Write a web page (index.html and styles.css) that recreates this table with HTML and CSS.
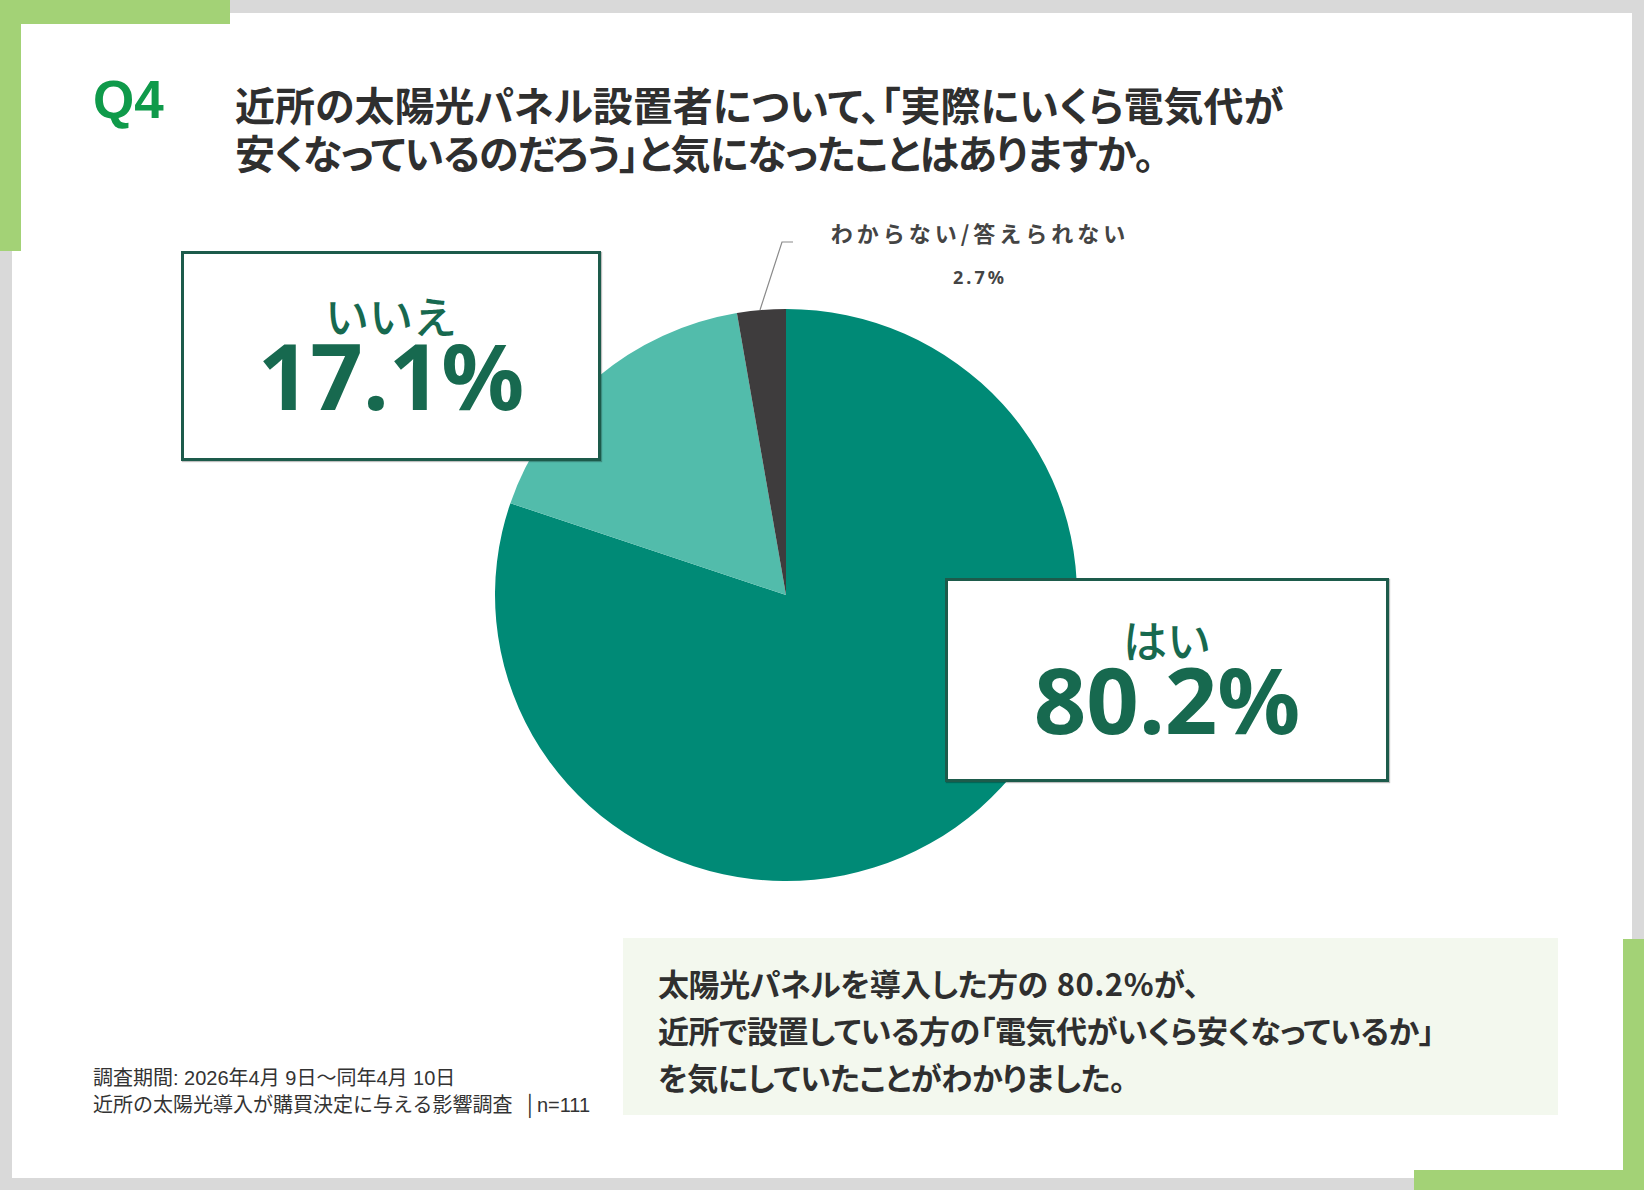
FILE: index.html
```html
<!DOCTYPE html>
<html lang="ja">
<head>
<meta charset="utf-8">
<title>Q4 調査結果</title>
<link rel="stylesheet" href="styles.css">
</head>
<body>
<div class="page">
  <div class="deco deco-tl-h"></div>
  <div class="deco deco-tl-v"></div>
  <div class="deco deco-br-v"></div>
  <div class="deco deco-br-h"></div>

  <div class="card">
    <header class="header">
      <div class="qnum">Q4</div>
      <h1 class="title"><span class="title-line">近所の太陽光パネル設置者について、「実際にいくら電気代が</span><span class="title-line title-line-2">安くなっているのだろう」と気になったことはありますか。</span></h1>
    </header>

    <section class="chart">
      <svg class="pie" width="1620" height="720" viewBox="0 0 1620 720">
        <path d="M774,396 L774,110 A291,286 0 1 1 498.4,304.2 Z" fill="#008a76"/>
        <path d="M774,396 L498.4,304.2 A291,286 0 0 1 724.9,114.1 Z" fill="#52bcab"/>
        <path d="M774,396 L724.9,114.1 A291,286 0 0 1 774,110 Z" fill="#3e3c3d"/>
        <polyline points="748,111 770,43 781,43" fill="none" stroke="#8a8a8a" stroke-width="1.2"/>
      </svg>

      <div class="callout">
        <div class="callout-label">わからない/答えられない</div>
        <div class="callout-value">2.7%</div>
      </div>

      <div class="result result-no">
        <div class="result-label">いいえ</div>
        <div class="result-value">17.1%</div>
      </div>

      <div class="result result-yes">
        <div class="result-label">はい</div>
        <div class="result-value">80.2%</div>
      </div>
    </section>

    <section class="bottom">
      <div class="note">
        <div>調査期間: 2026年4月 9日～同年4月 10日</div>
        <div>近所の太陽光導入が購買決定に与える影響調査<span class="note-n">│n=111</span></div>
      </div>
      <div class="summary">
        <p>太陽光パネルを導入した方の<span class="num">80.2%</span>が、</p>
        <p>近所で設置している方の「電気代がいくら安くなっているか」</p>
        <p>を気にしていたことがわかりました。</p>
      </div>
    </section>
  </div>
</div>
</body>
</html>
```

FILE: styles.css
```css
* { box-sizing: border-box; }

html, body {
  margin: 0;
  padding: 0;
}

body {
  width: 1644px;
  height: 1190px;
  overflow: hidden;
  background: #d9d9d9;
  font-family: "Noto Sans CJK JP", "Noto Sans", sans-serif;
  color: #333333;
}

.page {
  position: relative;
  width: 1644px;
  height: 1190px;
  padding: 13px 12px 12px 12px;
  background: #d9d9d9;
}

.deco {
  position: absolute;
  background: #a3d276;
  z-index: 2;
}
.deco-tl-h { left: 0; top: 0; width: 230px; height: 24px; }
.deco-tl-v { left: 0; top: 0; width: 21px; height: 251px; }
.deco-br-v { right: 0; top: 939px; width: 21px; bottom: 0; }
.deco-br-h { right: 0; bottom: 0; width: 230px; height: 20px; }

.card {
  width: 1620px;
  height: 1165px;
  background: #ffffff;
  display: flex;
  flex-direction: column;
}

/* Header */
.header {
  display: flex;
  align-items: flex-start;
  padding: 61px 0 0 81px;
}

.qnum {
  width: 142px;
  flex: none;
  font-family: "Liberation Sans", Arial, sans-serif;
  font-weight: 700;
  font-size: 53px;
  line-height: 52px;
  color: #0f9a4a;
}

.title {
  margin: 6px 0 0 0;
  font-family: "Noto Sans CJK JP", sans-serif;
  font-weight: 700;
  font-size: 40px;
  line-height: 48px;
  letter-spacing: 0;
  font-feature-settings: "palt";
  color: #2f2f2f;
  white-space: nowrap;
}
.title-line {
  display: block;
}
.title-line-2 {
  letter-spacing: -1px;
}

/* Chart */
.chart {
  position: relative;
  margin-top: 23px;
  height: 720px;
  flex: none;
}

.pie {
  position: absolute;
  left: 0;
  top: 0;
  display: block;
}

.callout {
  position: absolute;
  left: 816px;
  top: 18px;
  width: 304px;
  text-align: center;
  color: #444444;
}
.callout-label {
  font-size: 22px;
  line-height: 30px;
  font-weight: 700;
  letter-spacing: 4px;
  white-space: nowrap;
}
.callout-value {
  margin-top: 18px;
  font-family: "Noto Sans", sans-serif;
  font-size: 18px;
  line-height: 24px;
  font-weight: 700;
  letter-spacing: 3px;
}

.result {
  position: absolute;
  background: #ffffff;
  border: 3px solid #1d5b4b;
  box-shadow: 1px 1px 1px rgba(0, 0, 0, 0.25);
  display: flex;
  flex-direction: column;
  align-items: center;
  padding-top: 43px;
  color: #17694f;
}
.result-no { left: 169px; top: 52px; width: 420px; height: 210px; }
.result-yes { left: 933px; top: 379px; width: 444px; height: 204px; padding-top: 40px; }

.result-label {
  font-size: 44px;
  line-height: 36px;
  font-weight: 500;
}
.result-value {
  margin-top: 6px;
  font-family: "Noto Sans", sans-serif;
  font-size: 92px;
  line-height: 72px;
  font-weight: 700;
}

/* Bottom */
.bottom {
  display: flex;
  align-items: flex-end;
  justify-content: space-between;
  margin-top: 19px;
  padding: 0 74px 0 81px;
}

.note {
  margin-bottom: -4px;
  font-family: "Liberation Sans", "Noto Sans CJK JP", sans-serif;
  font-size: 20px;
  line-height: 27px;
  color: #333333;
  white-space: nowrap;
}
.note-n {
  margin-left: 12px;
}

.summary {
  width: 935px;
  height: 177px;
  background: #f3f8ee;
  padding: 21px 0 0 35px;
}
.summary p {
  margin: 0;
  font-size: 31px;
  line-height: 47px;
  font-weight: 700;
  letter-spacing: -0.4px;
  font-feature-settings: "palt";
  color: #2f2f2f;
  white-space: nowrap;
}
.summary .num {
  margin-left: 9px;
  letter-spacing: 0.5px;
}
```
